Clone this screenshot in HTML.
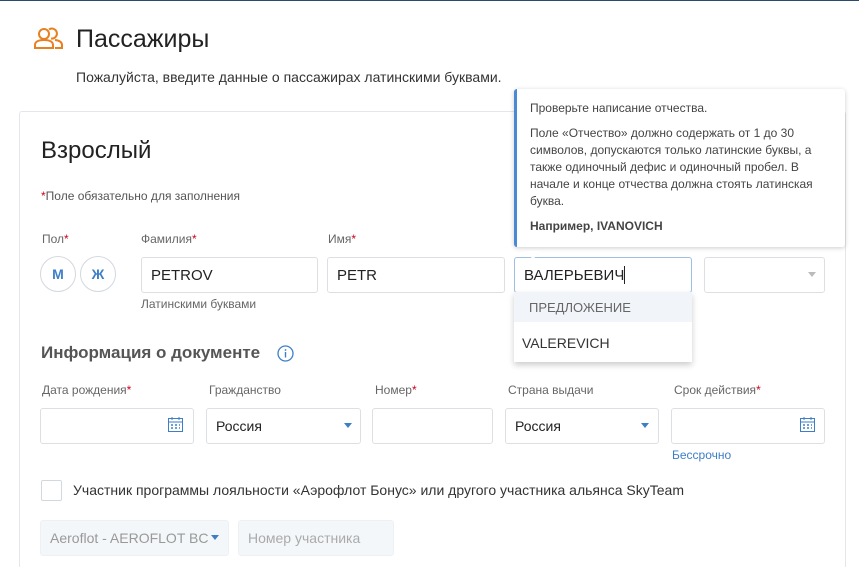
<!DOCTYPE html>
<html style="width:859px;height:567px;overflow:hidden"><head><meta charset="utf-8"><style>
*{box-sizing:border-box;margin:0;padding:0}
body{width:859px;height:567px;overflow:hidden;background:#fff;font-family:"Liberation Sans",sans-serif;color:#333;position:relative}
.a{position:absolute}
.inp{position:absolute;border:1px solid #dcdfe3;border-radius:3px;background:#fff;font-size:15px;color:#222;padding-left:9px;display:flex;align-items:center}
.lbl{position:absolute;font-size:12px;color:#666}
.req{color:#d0021b}
.caret{position:absolute;width:0;height:0;border-left:4px solid transparent;border-right:4px solid transparent;border-top:5px solid #3d7fc7}
.circ{position:absolute;width:36px;height:36px;border:1px solid #d3d8df;border-radius:50%;color:#3d7fc7;font-weight:bold;font-size:14px;display:flex;align-items:center;justify-content:center}
</style></head><body>
<div class="a" style="left:0;top:0;width:859px;height:1px;background:#2c4a6e"></div>
<svg class="a" style="left:34px;top:27px" width="30" height="22" viewBox="0 0 30 22" fill="none" stroke="#e8801f" stroke-width="2">
<circle cx="10" cy="7" r="5"/><path d="M1 21v-3c0-3 3-5 9-5s9 2 9 5v3z"/><path d="M15 2.5a5 5 0 1 1 2 9M21 13c4 .5 7 2 7 5v3h-7"/></svg>
<div class="a" style="left:76px;top:25px;font-size:25px;color:#222">Пассажиры</div>
<div class="a" style="left:76px;top:69px;font-size:14px;color:#333">Пожалуйста, введите данные о пассажирах латинскими буквами.</div>
<div class="a" style="left:19px;top:111px;width:827px;height:456px;border:1px solid #e3e6ea;border-bottom:none;border-radius:3px 3px 0 0"></div>
<div class="a" style="left:41px;top:137px;font-size:24px;color:#222">Взрослый</div>
<div class="a" style="left:41px;top:189px;font-size:12px;color:#555"><span class="req">*</span>Поле обязательно для заполнения</div>
<div class="lbl" style="left:42px;top:232px">Пол<span class="req">*</span></div>
<div class="lbl" style="left:141px;top:232px">Фамилия<span class="req">*</span></div>
<div class="lbl" style="left:328px;top:232px">Имя<span class="req">*</span></div>
<div class="circ" style="left:40px;top:256px">М</div>
<div class="circ" style="left:80px;top:256px">Ж</div>
<div class="inp" style="left:141px;top:257px;width:177px;height:36px">PETROV</div>
<div class="inp" style="left:327px;top:257px;width:178px;height:36px">PETR</div>
<div class="lbl" style="left:141px;top:297px">Латинскими буквами</div>
<div class="inp" style="left:514px;top:257px;width:178px;height:36px;border-color:#9fbfe0">ВАЛЕРЬЕВИЧ<span style="display:inline-block;width:1px;height:18px;background:#222"></span></div>
<div class="inp" style="left:704px;top:257px;width:121px;height:36px"></div>
<div class="caret" style="left:808px;top:272px;border-top-color:#bbb"></div>
<div class="a" style="left:514px;top:292px;width:178px;height:70px;background:#fff;box-shadow:0 3px 6px rgba(0,0,0,.2)">
<div style="height:30px;background:#f1f4f8;font-size:13px;color:#666;padding:8px 0 0 15px">ПРЕДЛОЖЕНИЕ</div>
<div style="font-size:14px;color:#333;padding:13px 0 0 8px">VALEREVICH</div></div>
<div class="a" style="left:514px;top:89px;width:331px;height:158px;background:#fff;border-left:3px solid #4a8ad4;border-radius:3px;box-shadow:0 1px 5px rgba(0,0,0,.2);padding:11px 12px 0 13px;font-size:12px;line-height:17px;color:#444">
<div>Проверьте написание отчества.</div>
<div style="margin-top:8px">Поле «Отчество» должно содержать от 1 до 30 символов, допускаются только латинские буквы, а также одиночный дефис и одиночный пробел. В начале и конце отчества должна стоять латинская буква.</div>
<div style="margin-top:8px;font-weight:bold">Например, IVANOVICH</div></div>
<div class="a" style="left:527px;top:245px;width:12px;height:12px;background:#fff;transform:rotate(45deg);box-shadow:2px 2px 3px rgba(0,0,0,.12);clip-path:polygon(100% 0,100% 100%,0 100%)"></div>
<div class="a" style="left:41px;top:343px;font-size:17px;font-weight:bold;color:#555">Информация о документе</div>
<svg class="a" style="left:277px;top:345px" width="17" height="17" viewBox="0 0 17 17"><circle cx="8.5" cy="8.5" r="7.5" fill="none" stroke="#3d7fc7" stroke-width="1.3"/><rect x="7.8" y="7" width="1.4" height="5.5" fill="#3d7fc7"/><circle cx="8.5" cy="5" r=".9" fill="#3d7fc7"/></svg>
<div class="lbl" style="left:42px;top:383px">Дата рождения<span class="req">*</span></div>
<div class="lbl" style="left:209px;top:383px">Гражданство</div>
<div class="lbl" style="left:375px;top:383px">Номер<span class="req">*</span></div>
<div class="lbl" style="left:508px;top:383px">Страна выдачи</div>
<div class="lbl" style="left:674px;top:383px">Срок действия<span class="req">*</span></div>
<div class="inp" style="left:40px;top:408px;width:154px;height:36px"></div>
<div class="inp" style="left:206px;top:408px;width:155px;height:36px;font-size:14px">Россия</div>
<div class="caret" style="left:344px;top:423px"></div>
<div class="inp" style="left:372px;top:408px;width:121px;height:36px"></div>
<div class="inp" style="left:505px;top:408px;width:154px;height:36px;font-size:14px">Россия</div>
<div class="caret" style="left:641px;top:423px"></div>
<div class="inp" style="left:671px;top:408px;width:154px;height:36px"></div>
<svg class="a" style="left:167px;top:416px" width="17" height="17" viewBox="0 0 17 17" fill="none" stroke="#3d7fc7"><rect x="1.5" y="2.5" width="14" height="13"/><path d="M1.5 6h14M5 1v3M12 1v3"/><path d="M4 9h2M8 9h2M12 9h1M4 12h2M8 12h2M12 12h1" stroke-width="1.5"/></svg>
<svg class="a" style="left:799px;top:416px" width="17" height="17" viewBox="0 0 17 17" fill="none" stroke="#3d7fc7"><rect x="1.5" y="2.5" width="14" height="13"/><path d="M1.5 6h14M5 1v3M12 1v3"/><path d="M4 9h2M8 9h2M12 9h1M4 12h2M8 12h2M12 12h1" stroke-width="1.5"/></svg>
<div class="a" style="left:672px;top:448px;font-size:12px;color:#3d7fc7">Бессрочно</div>
<div class="a" style="left:41px;top:480px;width:21px;height:21px;border:1px solid #d3d8df;border-radius:2px"></div>
<div class="a" style="left:73px;top:482px;font-size:14px;color:#333">Участник программы лояльности «Аэрофлот Бонус» или другого участника альянса SkyTeam</div>
<div class="inp" style="left:40px;top:520px;width:189px;height:36px;background:#f4f7fa;border-color:#eef1f4;color:#999;font-size:14px">Aeroflot - AEROFLOT BC</div>
<div class="caret" style="left:211px;top:535px"></div>
<div class="inp" style="left:238px;top:520px;width:156px;height:36px;background:#f4f7fa;border-color:#eef1f4;color:#aaa;font-size:14px">Номер участника</div>
</body></html>
